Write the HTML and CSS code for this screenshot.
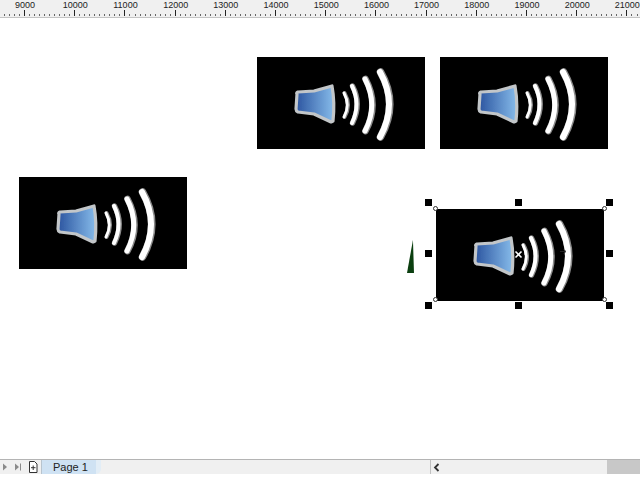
FILE: index.html
```html
<!DOCTYPE html>
<html lang="en">
<head>
    <meta charset="UTF-8">
    <title>Page 1</title>
    <link rel="stylesheet" href="styles.css">
</head>
<body>
    <svg class="defs" width="0" height="0">
        <defs>
            <linearGradient id="cone" x1="0" y1="0" x2="1" y2="0">
                <stop offset="0" stop-color="#2c55a0"/>
                <stop offset="1" stop-color="#86bbea"/>
            </linearGradient>
            <filter id="soft" x="-5%" y="-5%" width="110%" height="110%">
                <feGaussianBlur stdDeviation="0.5"/>
            </filter>
            <symbol id="speaker" viewBox="0 0 168 92">
                <rect width="168" height="92" fill="#000"/>
                <g filter="url(#soft)">
                    <path d="M40 37 Q39 36 41 35 L57 34 L75 29 Q78 45 76 64 L74 65 L57 57 L41 55 Q39 54 39 52 Z" fill="url(#cone)" stroke="#c2c6c9" stroke-width="3.2" stroke-linejoin="round"/>
                    <g fill="none" stroke="#8a8a8a" stroke-linecap="round">
                        <path d="M87.5 36 Q94.5 48 87.5 60" stroke-width="4"/>
                        <path d="M95.5 29 Q105 47 95.5 66" stroke-width="5.4"/>
                        <path d="M108.5 22 Q122.5 48 108.5 74" stroke-width="6.6"/>
                        <path d="M123.5 15 Q142 47 123.5 80" stroke-width="7.6"/>
                    </g>
                    <g fill="none" stroke="#fff" stroke-linecap="round">
                        <path d="M87 36 Q93.5 48 87 60" stroke-width="2.8"/>
                        <path d="M95 29 Q104 47 95 66" stroke-width="4"/>
                        <path d="M108 22 Q121.5 48 108 74" stroke-width="5"/>
                        <path d="M123 15 Q141 47 123 80" stroke-width="6"/>
                    </g>
                </g>
            </symbol>
        </defs>
    </svg>

    <div class="ruler">
        <span>9000</span><span>10000</span><span>11000</span><span>12000</span><span>13000</span><span>14000</span><span>15000</span><span>16000</span><span>17000</span><span>18000</span><span>19000</span><span>20000</span><span>21000</span>
    </div>

    <main class="canvas">
        <svg class="clip clip-a"><use href="#speaker"/></svg>
        <svg class="clip clip-b"><use href="#speaker"/></svg>
        <svg class="clip clip-c"><use href="#speaker"/></svg>
        <div class="sliver"></div>
        <svg class="clip clip-d"><use href="#speaker"/></svg>

        <!-- selection handles round clip-d -->
        <i class="handle h1"></i><i class="handle h2"></i><i class="handle h3"></i>
        <i class="handle h4"></i><i class="handle h5"></i>
        <i class="handle h6"></i><i class="handle h7"></i><i class="handle h8"></i>
        <i class="corner c1"></i><i class="corner c2"></i><i class="corner c3"></i><i class="corner c4"></i>

        <svg class="pivot" width="9" height="9" viewBox="0 0 9 9">
            <path d="M1.5 1.5 L7.5 7.5 M7.5 1.5 L1.5 7.5" stroke="#fff" stroke-width="1.6"/>
        </svg>
        <svg class="cursor" width="7" height="7" viewBox="0 0 7 7">
            <path d="M0 3.5 H5 M3.5 1.5 L6 3.5 L3.5 5.5" fill="none" stroke="#222" stroke-width="1"/>
        </svg>
    </main>

    <footer class="statusbar">
        <div class="pager">
            <svg class="nav" width="8" height="10" viewBox="0 0 8 10"><path d="M2 1.5 L6 5 L2 8.5 Z" fill="#8a8a8a"/></svg>
            <svg class="nav nav-end" width="10" height="10" viewBox="0 0 10 10"><path d="M2 1.5 L6 5 L2 8.5 Z" fill="#8a8a8a"/><path d="M7.5 1.5 V8.5" stroke="#8a8a8a"/></svg>
            <svg class="nav nav-page" width="10" height="12" viewBox="0 0 10 12"><path d="M1.5 .5 H6.5 L9 3 V11.5 H1.5 Z" fill="#fff" stroke="#333"/><path d="M5.2 4.5 V9 M3 6.7 H7.5" stroke="#333"/></svg>
            <div class="tab">Page 1</div>
            <div class="tab-end"></div>
        </div>
        <div class="hscroll">
            <svg class="left-arrow" width="7" height="9" viewBox="0 0 7 9"><path d="M5.5 1 L2 4.5 L5.5 8" fill="none" stroke="#333" stroke-width="1.8"/></svg>
            <div class="thumb"></div>
        </div>
    </footer>
    <div class="bottom-gap"></div>
</body>
</html>
```

FILE: styles.css
```css
html, body {
    margin: 0;
    padding: 0;
}

body {
    width: 640px;
    height: 480px;
    display: flex;
    flex-direction: column;
    background: #fff;
    font-family: "Liberation Sans", Arial, sans-serif;
    overflow: hidden;
}

.defs {
    position: absolute;
}

/* Ruler */
.ruler {
    height: 17px;
    flex: none;
    display: flex;
    background-color: #f0f0f0;
    background-image:
        repeating-linear-gradient(90deg, #222 0, #222 1px, transparent 1px, transparent 50.2px),
        repeating-linear-gradient(90deg, #666 0, #666 1px, transparent 1px, transparent 5.02px);
    background-size: 100% 6px, 100% 2px;
    background-position: 24px 10px, 4px 14px;
    background-repeat: no-repeat;
    border-bottom: 1px solid #c4c4c4;
}

.ruler span {
    flex: none;
    width: 50.2px;
    font-size: 9px;
    line-height: 10px;
    text-align: center;
    color: #222;
}

/* Drawing area, objects sit at free positions */
.canvas {
    position: relative;
    flex: 1;
}

.clip {
    position: absolute;
    width: 168px;
    height: 92px;
}

.clip-a { left: 257px; top: 39px; }
.clip-b { left: 440px; top: 39px; }
.clip-c { left: 19px; top: 159px; }
.clip-d { left: 436px; top: 191px; }

.sliver {
    position: absolute;
    left: 407px;
    top: 222px;
    width: 7px;
    height: 33px;
    background: #0b3f10;
    clip-path: polygon(85% 0, 100% 100%, 0 100%);
}

.handle {
    position: absolute;
    width: 7px;
    height: 7px;
    background: #000;
}

.h1 { left: 425px; top: 181px; }
.h2 { left: 515px; top: 181px; }
.h3 { left: 606px; top: 181px; }
.h4 { left: 425px; top: 232px; }
.h5 { left: 606px; top: 232px; }
.h6 { left: 425px; top: 284px; }
.h7 { left: 515px; top: 284px; }
.h8 { left: 606px; top: 284px; }

.corner {
    position: absolute;
    width: 3px;
    height: 3px;
    background: #fff;
    border: 1px solid #333;
    border-radius: 50%;
}

.c1 { left: 433px; top: 188px; }
.c2 { left: 602px; top: 188px; }
.c3 { left: 433px; top: 279px; }
.c4 { left: 602px; top: 279px; }

.pivot {
    position: absolute;
    left: 514px;
    top: 232px;
}

.cursor {
    position: absolute;
    left: 560px;
    top: 230px;
}

/* Page tabs and scroller */
.statusbar {
    height: 14px;
    flex: none;
    display: flex;
    background: #f0f0f0;
    border-top: 1px solid #b4b4b4;
}

.pager {
    width: 431px;
    flex: none;
    display: flex;
    align-items: center;
    border-right: 1px solid #c0c0c0;
    box-sizing: border-box;
}

.nav {
    flex: none;
    margin-left: 1px;
}

.nav-end {
    margin-left: 4px;
}

.nav-page {
    margin-left: 5px;
}

.tab {
    width: 54px;
    height: 14px;
    margin-left: 3px;
    background: #cfe2f3;
    border-left: 1px solid #b8c4ce;
    font-size: 11px;
    line-height: 14px;
    text-indent: 11px;
    color: #222;
}

.tab-end {
    width: 5px;
    height: 14px;
    background: #e2edf6;
    border-bottom-right-radius: 5px;
}

.hscroll {
    flex: 1;
    display: flex;
    align-items: center;
    justify-content: space-between;
    padding-left: 2px;
}

.thumb {
    width: 33px;
    height: 14px;
    background: #c8c8c8;
}

.bottom-gap {
    height: 6px;
    flex: none;
    background: #fff;
}
```
